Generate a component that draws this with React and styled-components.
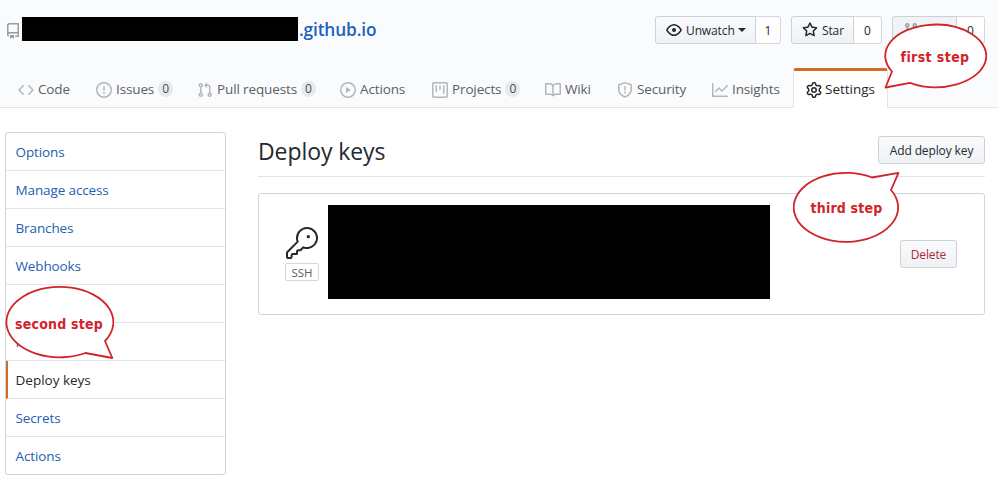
import React from "react";
import styled, { createGlobalStyle, css } from "styled-components";

const Global = createGlobalStyle`
  *, *::before, *::after { box-sizing: border-box; }
  body {
    margin: 0;
    background: #fff;
    color: #24292e;
    font: 13.5px/20px "Open Sans", "Noto Sans", sans-serif;
    overflow: hidden;
  }
`;

const ICONS = {
  repo: "M2 2.5A2.5 2.5 0 014.5 0h8.75a.75.75 0 01.75.75v12.5a.75.75 0 01-.75.75h-2.5a.75.75 0 110-1.5h1.75v-2h-8a1 1 0 00-.714 1.7.75.75 0 01-1.072 1.05A2.495 2.495 0 012 11.5v-9zm10.5-1V9h-8c-.356 0-.694.074-1 .208V2.5a1 1 0 011-1h8zM5 12.25v3.25a.25.25 0 00.4.2l1.45-1.087a.25.25 0 01.3 0L8.6 15.7a.25.25 0 00.4-.2v-3.25a.25.25 0 00-.25-.25h-3.5a.25.25 0 00-.25.25z",
  code: "M4.72 3.22a.75.75 0 011.06 1.06L2.06 8l3.72 3.72a.75.75 0 11-1.06 1.06L.47 8.53a.75.75 0 010-1.06l4.25-4.25zm6.56 0a.75.75 0 10-1.06 1.06L13.94 8l-3.72 3.72a.75.75 0 101.06 1.06l4.25-4.25a.75.75 0 000-1.06l-4.25-4.25z",
  issue: "M8 1.5a6.5 6.5 0 100 13 6.5 6.5 0 000-13zM0 8a8 8 0 1116 0A8 8 0 010 8zm9 3a1 1 0 11-2 0 1 1 0 012 0zm-.25-6.25a.75.75 0 00-1.5 0v3.5a.75.75 0 001.5 0v-3.5z",
  pull: "M7.177 3.073L9.573.677A.25.25 0 0110 .854v4.792a.25.25 0 01-.427.177L7.177 3.427a.25.25 0 010-.354zM3.75 2.5a.75.75 0 100 1.5.75.75 0 000-1.5zm-2.25.75a2.25 2.25 0 113 2.122v5.256a2.251 2.251 0 11-1.5 0V5.372A2.25 2.25 0 011.5 3.25zM11 2.5h-1V4h1a1 1 0 011 1v5.628a2.251 2.251 0 101.5 0V5A2.5 2.5 0 0011 2.5zm1 10.25a.75.75 0 111.5 0 .75.75 0 01-1.5 0zM3.75 12a.75.75 0 100 1.5.75.75 0 000-1.5z",
  play: "M1.5 8a6.5 6.5 0 1113 0 6.5 6.5 0 01-13 0zM8 0a8 8 0 100 16A8 8 0 008 0zM6.379 5.227A.25.25 0 006 5.442v5.117a.25.25 0 00.379.214l4.264-2.559a.25.25 0 000-.428L6.379 5.227z",
  project: "M1.75 0A1.75 1.75 0 000 1.75v12.5C0 15.216.784 16 1.75 16h12.5A1.75 1.75 0 0016 14.25V1.75A1.75 1.75 0 0014.25 0H1.75zM1.5 1.75a.25.25 0 01.25-.25h12.5a.25.25 0 01.25.25v12.5a.25.25 0 01-.25.25H1.75a.25.25 0 01-.25-.25V1.75zM11.75 3a.75.75 0 00-.75.75v7.5a.75.75 0 001.5 0v-7.5a.75.75 0 00-.75-.75zm-8.25.75a.75.75 0 011.5 0v5.5a.75.75 0 01-1.5 0v-5.5zM8 3a.75.75 0 00-.75.75v3.5a.75.75 0 001.5 0v-3.5A.75.75 0 008 3z",
  book: "M0 1.75A.75.75 0 01.75 1h4.253c1.227 0 2.317.59 3 1.501A3.744 3.744 0 0111.006 1h4.245a.75.75 0 01.75.75v10.5a.75.75 0 01-.75.75h-4.507a2.25 2.25 0 00-1.591.659l-.622.621a.75.75 0 01-1.06 0l-.622-.621A2.25 2.25 0 005.258 13H.75a.75.75 0 01-.75-.75V1.75zm8.755 3a2.25 2.25 0 012.25-2.25H14.5v9h-3.757c-.71 0-1.4.201-1.992.572l.004-7.322zm-1.504 7.324l.004-5.073-.002-2.253A2.25 2.25 0 005.003 2.5H1.5v9h3.757a3.75 3.75 0 011.994.574z",
  shield: "M7.467.133a1.75 1.75 0 011.066 0l5.25 1.68A1.75 1.75 0 0115 3.48V7c0 1.566-.32 3.182-1.303 4.682-.983 1.498-2.585 2.813-5.032 3.855a1.7 1.7 0 01-1.33 0c-2.447-1.042-4.049-2.357-5.032-3.855C1.32 10.182 1 8.566 1 7V3.48a1.75 1.75 0 011.217-1.667l5.25-1.68zm.61 1.429a.25.25 0 00-.153 0l-5.25 1.68a.25.25 0 00-.174.238V7c0 1.358.275 2.666 1.057 3.86.784 1.194 2.121 2.34 4.366 3.297a.2.2 0 00.154 0c2.245-.956 3.582-2.104 4.366-3.298C13.225 9.666 13.5 8.36 13.5 7V3.48a.25.25 0 00-.174-.237l-5.25-1.68zM9 10.5a1 1 0 11-2 0 1 1 0 012 0zm-.25-5.75a.75.75 0 10-1.5 0v3a.75.75 0 001.5 0v-3z",
  graph: "M1.5 1.75a.75.75 0 00-1.5 0v12.5c0 .414.336.75.75.75h14.5a.75.75 0 000-1.5H1.5V1.75zm14.28 2.53a.75.75 0 00-1.06-1.06L10 7.94 7.53 5.47a.75.75 0 00-1.06 0L3.22 8.72a.75.75 0 001.06 1.06L7 7.06l2.47 2.47a.75.75 0 001.06 0l5.25-5.25z",
  gear: "M7.429 1.525a6.593 6.593 0 011.142 0c.036.003.108.036.137.146l.289 1.105c.147.56.55.967.997 1.189.174.086.341.183.501.29.417.278.97.423 1.53.27l1.102-.303c.11-.03.175.016.195.046.219.31.41.641.573.989.014.031.022.11-.059.19l-.815.806c-.411.406-.562.957-.53 1.456a4.588 4.588 0 010 .582c-.032.499.119 1.05.53 1.456l.815.806c.08.08.073.159.059.19a6.494 6.494 0 01-.573.99c-.02.029-.086.074-.195.045l-1.103-.303c-.559-.153-1.112-.008-1.529.27-.16.107-.327.204-.5.29-.449.222-.851.628-.998 1.189l-.289 1.105c-.029.11-.101.143-.137.146a6.613 6.613 0 01-1.142 0c-.036-.003-.108-.037-.137-.146l-.289-1.105c-.147-.56-.55-.967-.997-1.189a4.502 4.502 0 01-.501-.29c-.417-.278-.97-.423-1.53-.27l-1.102.303c-.11.03-.175-.016-.195-.046a6.492 6.492 0 01-.573-.989c-.014-.031-.022-.11.059-.19l.815-.806c.411-.406.562-.957.53-1.456a4.587 4.587 0 010-.582c.032-.499-.119-1.05-.53-1.456l-.815-.806c-.08-.08-.073-.159-.059-.19a6.44 6.44 0 01.573-.99c.02-.029.086-.075.195-.045l1.103.303c.559.153 1.112.008 1.529-.27.16-.107.327-.204.5-.29.449-.222.851-.628.998-1.189l.289-1.105c.029-.11.101-.143.137-.146zM8 0c-.236 0-.47.01-.701.03-.743.065-1.29.615-1.458 1.261l-.29 1.106c-.017.066-.078.158-.211.224a5.994 5.994 0 00-.668.386c-.123.082-.233.09-.3.071L3.27 2.776c-.644-.177-1.392.02-1.82.63a7.977 7.977 0 00-.704 1.217c-.315.675-.111 1.422.363 1.891l.815.806c.05.048.098.147.088.294a6.084 6.084 0 000 .772c.01.147-.038.246-.088.294l-.815.806c-.474.469-.678 1.216-.363 1.891.2.428.436.835.704 1.218.428.609 1.176.806 1.82.63l1.103-.303c.066-.019.176-.011.299.071.213.143.436.272.668.386.133.066.194.158.212.224l.289 1.106c.169.646.715 1.196 1.458 1.26a8.094 8.094 0 001.402 0c.743-.064 1.29-.614 1.458-1.26l.29-1.106c.017-.066.078-.158.211-.224a5.98 5.98 0 00.668-.386c.123-.082.233-.09.3-.071l1.102.302c.644.177 1.392-.02 1.82-.63.268-.382.505-.789.704-1.217.315-.675.111-1.422-.364-1.891l-.814-.806c-.05-.048-.098-.147-.088-.294a6.1 6.1 0 000-.772c-.01-.147.039-.246.088-.294l.814-.806c.475-.469.679-1.216.364-1.891a7.992 7.992 0 00-.704-1.218c-.428-.609-1.176-.806-1.82-.63l-1.103.303c-.066.019-.176.011-.299-.071a5.991 5.991 0 00-.668-.386c-.133-.066-.194-.158-.212-.224L10.16 1.29C9.99.645 9.444.095 8.701.031A8.094 8.094 0 008 0zm1.5 8a1.5 1.5 0 11-3 0 1.5 1.5 0 013 0zM11 8a3 3 0 11-6 0 3 3 0 016 0z",
  eye: "M1.679 7.932c.412-.621 1.242-1.75 2.366-2.717C5.175 4.242 6.527 3.5 8 3.5c1.473 0 2.824.742 3.955 1.715 1.124.967 1.954 2.096 2.366 2.717a.119.119 0 010 .136c-.412.621-1.242 1.75-2.366 2.717C10.825 11.758 9.473 12.5 8 12.5c-1.473 0-2.824-.742-3.955-1.715C2.92 9.818 2.09 8.69 1.679 8.068a.119.119 0 010-.136zM8 2c-1.981 0-3.67.992-4.933 2.078C1.797 5.169.88 6.423.43 7.1a1.619 1.619 0 000 1.798c.45.678 1.367 1.932 2.637 3.024C4.329 13.008 6.019 14 8 14c1.981 0 3.67-.992 4.933-2.078 1.27-1.091 2.187-2.345 2.637-3.023a1.619 1.619 0 000-1.798c-.45-.678-1.367-1.932-2.637-3.023C11.671 2.992 9.981 2 8 2zm0 8a2 2 0 100-4 2 2 0 000 4z",
  star: "M8 .25a.75.75 0 01.673.418l1.882 3.815 4.21.612a.75.75 0 01.416 1.279l-3.046 2.97.719 4.192a.75.75 0 01-1.088.791L8 12.347l-3.766 1.98a.75.75 0 01-1.088-.79l.72-4.194L.818 6.374a.75.75 0 01.416-1.28l4.21-.611L7.327.668A.75.75 0 018 .25zm0 2.445L6.615 5.5a.75.75 0 01-.564.41l-3.097.45 2.24 2.184a.75.75 0 01.216.664l-.528 3.084 2.769-1.456a.75.75 0 01.698 0l2.77 1.456-.53-3.084a.75.75 0 01.216-.664l2.24-2.183-3.096-.45a.75.75 0 01-.564-.41L8 2.694v.001z",
  fork: "M5 3.25a.75.75 0 11-1.5 0 .75.75 0 011.5 0zm0 2.122a2.25 2.25 0 10-1.5 0v.878A2.25 2.25 0 005.75 8.5h1.5v2.128a2.251 2.251 0 101.5 0V8.5h1.5a2.25 2.25 0 002.25-2.25v-.878a2.25 2.25 0 10-1.5 0v.878a.75.75 0 01-.75.75h-4.5A.75.75 0 015 6.25v-.878zm3.75 7.378a.75.75 0 11-1.5 0 .75.75 0 011.5 0zm3-8.75a.75.75 0 100-1.5.75.75 0 000 1.5z",
};

const Svg = styled.svg`
  display: block;
  flex: none;
  fill: currentColor;
`;

const Icon = ({ name }) => (
  <Svg width="16" height="16" viewBox="0 0 16 16" aria-hidden="true">
    <path fillRule="evenodd" d={ICONS[name]} />
  </Svg>
);

const Page = styled.div`
  position: relative;
  width: 998px;
  height: 483px;
  overflow: hidden;
`;

const Header = styled.header`
  height: 108px;
  background: #fafbfc;
  border-bottom: 1px solid #e1e4e8;
  display: flex;
  flex-direction: column;
  justify-content: space-between;
`;

const TitleRow = styled.div`
  display: flex;
  justify-content: space-between;
  align-items: flex-start;
  padding: 16px 13px 0 5px;
`;

const RepoTitle = styled.h1`
  margin: 0;
  display: flex;
  align-items: center;
  height: 25px;
  color: #959da5;

  > svg { margin-top: 4px; }
`;

const Redacted = styled.span`
  display: block;
  flex: none;
  background: #000;
  width: ${(p) => p.$w}px;
  height: ${(p) => p.$h}px;
`;

const RepoLink = styled.a`
  color: #1f5fbf;
  font-size: 17.3px;
  font-weight: 600;
  letter-spacing: -0.15px;
  line-height: 24px;
  margin: 3px 0 0 1px;
`;

const TitleRedacted = styled(Redacted)`
  margin: 0 0 0 1px;
`;

const Actions = styled.div`
  display: flex;
  gap: 10px;
`;

const buttonFace = css`
  background: linear-gradient(180deg, #fafbfc, #eff3f6 90%);
  border: 1px solid #cdd0d4;
  font-size: 12px;
  font-weight: 500;
  letter-spacing: -0.12px;
  color: #24292e;
`;

const SocialGroup = styled.div`
  display: flex;
  height: 28px;
  width: ${(p) => p.$w}px;
`;

const SocialButton = styled.button`
  ${buttonFace}
  font-family: inherit;
  border-radius: 3px 0 0 3px;
  width: ${(p) => p.$w}px;
  display: flex;
  align-items: center;
  gap: 4px;
  padding: 0 0 0 10px;
  ${(p) => p.$faded && "background: #eff3f6; color: #959da5;"}
`;

const Count = styled.span`
  flex: 1;
  border: 1px solid #d5d7da;
  border-left: 0;
  border-radius: 0 3px 3px 0;
  background: #fff;
  font-size: 12px;
  font-weight: 500;
  line-height: 27px;
  text-align: center;
`;

const Caret = styled.span`
  border: 4px solid transparent;
  border-top-color: currentColor;
  border-bottom: 0;
  margin-left: -1px;
`;

const Tabs = styled.nav`
  display: flex;
  padding-left: 5px;
  margin-bottom: -1px;
`;

const Tab = styled.a`
  display: flex;
  align-items: center;
  width: ${(p) => p.$w}px;
  height: 40px;
  padding: 1px 0 0 12px;
  border: 1px solid transparent;
  border-top: 3px solid transparent;
  border-bottom: 0;
  color: #586069;
  letter-spacing: -0.13px;
  white-space: nowrap;

  svg { color: #b4b7ba; margin-right: 4px; }

  ${(p) =>
    p.$active &&
    css`
      background: #fff;
      border-color: #d36a2a #e1e4e8 transparent;
      border-radius: 3px 3px 0 0;
      color: #24292e;
      letter-spacing: 0;
      svg { color: #24292e; margin-right: 3px; }
    `}
`;

const TabLabel = styled.span`
  padding-bottom: 2px;
`;

const Badge = styled.span`
  width: 15px;
  height: 16px;
  margin: 0 0 2px 4px;
  border-radius: 8px;
  background: #e7e9eb;
  color: #444d56;
  font-size: 12px;
  font-weight: 500;
  line-height: 16px;
  text-align: center;
  letter-spacing: 0;
`;

const Body = styled.main`
  display: flex;
  align-items: flex-start;
  gap: 32px;
  padding: 24px 13px 0 5px;
`;

const Menu = styled.nav`
  width: 221px;
  height: 343px;
  flex: none;
  border: 1px solid #d1d5da;
  border-radius: 3px;
  overflow: hidden;
`;

const MenuItem = styled.a`
  display: block;
  height: 38px;
  padding: 9px 0 0 9.5px;
  border-bottom: 1px solid #e1e4e8;
  color: #2560b0;
  letter-spacing: -0.12px;

  &:last-child { border-bottom: 0; }

  ${(p) =>
    p.$active &&
    css`
      padding-left: 7.5px;
      border-left: 2px solid #d36a2a;
      color: #24292e;
      font-weight: 500;
      letter-spacing: 0;
    `}
`;

const Content = styled.section`
  flex: 1;
`;

const SubHead = styled.div`
  display: flex;
  justify-content: space-between;
  align-items: flex-start;
  height: 45px;
  border-bottom: 1px solid #e1e4e8;
`;

const Heading = styled.h2`
  margin: 3px 0 0;
  font-size: 23px;
  font-weight: 400;
  line-height: 32px;
  letter-spacing: -0.08px;
`;

const Button = styled.button`
  ${buttonFace}
  font-family: inherit;
  height: 28px;
  width: ${(p) => p.$w}px;
  padding: 0;
  border-radius: 3px;
  color: ${(p) => (p.$danger ? "#b02a37" : "#24292e")};
  white-space: nowrap;
`;

const AddButton = styled(Button)`
  margin-top: 4px;
`;

const KeyCard = styled.article`
  display: flex;
  align-items: flex-start;
  height: 122px;
  margin-top: 16px;
  padding: 11px 27px 0 26px;
  border: 1px solid #d1d5da;
  border-radius: 3px;
`;

const KeyMark = styled.div`
  display: flex;
  flex-direction: column;
  align-items: center;
  width: 34px;
  margin: 22px 9px 0 0;
`;

const SshTag = styled.span`
  width: 34px;
  height: 18px;
  margin-top: 4px;
  border: 1px solid #d5d8dc;
  border-radius: 2px;
  color: #586069;
  font-size: 11.5px;
  line-height: 17px;
  text-align: center;
`;

const DeleteButton = styled(Button)`
  margin: 35px 0 0 auto;
`;

const Callout = styled.div`
  position: absolute;
  left: ${(p) => p.$x}px;
  top: ${(p) => p.$y}px;
  width: ${(p) => p.$w}px;
  height: ${(p) => p.$h}px;
  display: grid;

  > * { grid-area: 1 / 1; }
`;

const CalloutText = styled.span`
  align-self: start;
  justify-self: center;
  margin-top: ${(p) => p.$top}px;
  color: #d2232a;
  font: bold 14px/18px "DejaVu Sans Condensed", "DejaVu Sans", sans-serif;
  font-stretch: condensed;
  letter-spacing: ${(p) => p.$ls}px;
  white-space: nowrap;
`;

const Bubble = ({ x, y, w, h, d, top, ls, children }) => (
  <Callout $x={x} $y={y} $w={w} $h={h}>
    <Svg width={w} height={h} viewBox={`0 0 ${w} ${h}`} aria-hidden="true">
      <path d={d} fill="#fff" stroke="#d2232a" strokeWidth="1.8" strokeLinejoin="round" />
    </Svg>
    <CalloutText $top={top} $ls={ls}>{children}</CalloutText>
  </Callout>
);

const TABS = [
  { icon: "code", label: "Code", w: 78 },
  { icon: "issue", label: "Issues", w: 101, count: 0 },
  { icon: "pull", label: "Pull requests", w: 143, count: 0 },
  { icon: "play", label: "Actions", w: 92 },
  { icon: "project", label: "Projects", w: 113, count: 0 },
  { icon: "book", label: "Wiki", w: 72 },
  { icon: "shield", label: "Security", w: 95 },
  { icon: "graph", label: "Insights", w: 94 },
  { icon: "gear", label: "Settings", w: 95, active: true },
];

const MENU = [
  "Options",
  "Manage access",
  "Branches",
  "Webhooks",
  "Notifications",
  "Integrations",
  "Deploy keys",
  "Secrets",
  "Actions",
];

export default function App() {
  return (
    <Page>
      <Global />
      <Header>
        <TitleRow>
          <RepoTitle>
            <Icon name="repo" />
            <TitleRedacted $w={276} $h={24} />
            <RepoLink>.github.io</RepoLink>
          </RepoTitle>
          <Actions>
            <SocialGroup $w={126}>
              <SocialButton $w={101}>
                <Icon name="eye" />
                Unwatch
                <Caret />
              </SocialButton>
              <Count>1</Count>
            </SocialGroup>
            <SocialGroup $w={91}>
              <SocialButton $w={63}>
                <Icon name="star" />
                Star
              </SocialButton>
              <Count>0</Count>
            </SocialGroup>
            <SocialGroup $w={93}>
              <SocialButton $w={65} $faded>
                <Icon name="fork" />
                Fork
              </SocialButton>
              <Count>0</Count>
            </SocialGroup>
          </Actions>
        </TitleRow>
        <Tabs>
          {TABS.map((t) => (
            <Tab key={t.label} $w={t.w} $active={t.active}>
              <Icon name={t.icon} />
              <TabLabel>{t.label}</TabLabel>
              {t.count !== undefined && <Badge>{t.count}</Badge>}
            </Tab>
          ))}
        </Tabs>
      </Header>
      <Body>
        <Menu>
          {MENU.map((m) => (
            <MenuItem key={m} $active={m === "Deploy keys"}>{m}</MenuItem>
          ))}
        </Menu>
        <Content>
          <SubHead>
            <Heading>Deploy keys</Heading>
            <AddButton $w={107}>Add deploy key</AddButton>
          </SubHead>
          <KeyCard>
            <KeyMark>
              <Svg width="32" height="32" viewBox="0 0 24 24" aria-hidden="true">
                <path d="M16.75 8.5a1.25 1.25 0 100-2.5 1.25 1.25 0 000 2.5z" />
                <path
                  fillRule="evenodd"
                  d="M15.75 0a8.25 8.25 0 00-7.851 10.79L.513 18.178A1.75 1.75 0 000 19.414v2.836C0 23.217.784 24 1.75 24h1.5A1.75 1.75 0 005 22.25v-1a.25.25 0 01.25-.25h2.735a.75.75 0 00.545-.22l.214-.213A.875.875 0 009 19.948V18.5a.25.25 0 01.25-.25h1.086c.464 0 .91-.184 1.237-.513l1.636-1.636A8.25 8.25 0 1015.75 0zM9 8.25a6.75 6.75 0 114.288 6.287.75.75 0 00-.804.168l-1.971 1.972a.25.25 0 01-.177.073H9.25A1.75 1.75 0 007.5 18.5v1H5.25a1.75 1.75 0 00-1.75 1.75v1a.25.25 0 01-.25.25h-1.5a.25.25 0 01-.25-.25v-2.836a.25.25 0 01.073-.177l7.722-7.721a.75.75 0 00.168-.804A6.73 6.73 0 019 8.25z"
                />
              </Svg>
              <SshTag>SSH</SshTag>
            </KeyMark>
            <Redacted $w={442} $h={94} />
            <DeleteButton $w={57} $danger>Delete</DeleteButton>
          </KeyCard>
        </Content>
      </Body>
      <Bubble
        x={883} y={23} w={104} h={66} top={25} ls={0.4}
        d="M9 48.500A50.500 31.300 0 1 1 27 59.800L2.500 64.500Z"
      >
        first step
      </Bubble>
      <Bubble
        x={4} y={286} w={110} h={73} top={29} ls={0.2}
        d="M101 55L108.300 72L81.500 67A53.500 35.200 0 1 1 101 55Z"
      >
        second step
      </Bubble>
      <Bubble
        x={793} y={171} w={107} h={73} top={28} ls={0.2}
        d="M79 6.500L105.500 1.800L98 19A52.200 34.500 0 1 1 79 6.500Z"
      >
        third step
      </Bubble>
    </Page>
  );
}
